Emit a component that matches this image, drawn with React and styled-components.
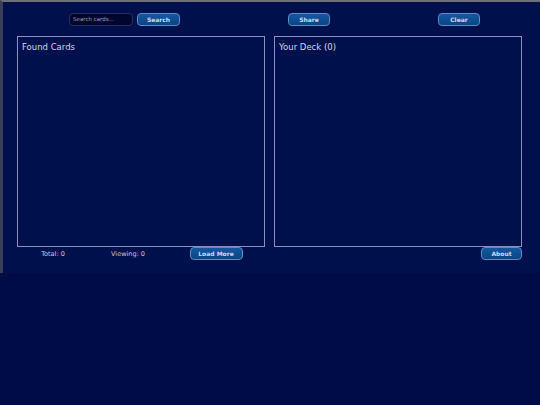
import styled, { createGlobalStyle } from 'styled-components';

const GlobalStyle = createGlobalStyle`
  html, body {
    margin: 0;
    padding: 0;
    background: #000c46;
    font-family: "Comic Sans MS", "DejaVu Sans", sans-serif;
  }
`;

const Frame = styled.div`
  box-sizing: border-box;
  width: 540px;
  height: 273px;
  background: #00104d;
  border-top: 2px solid #6e6f7a;
  border-left: 3px solid #3c3e58;
  box-shadow: 0 2px 2px #000524;
  display: flex;
  flex-direction: column;
`;

const Toolbar = styled.div`
  display: flex;
  align-items: center;
  gap: 108px;
  height: 34px;
  padding-left: 66px;
`;

const SearchGroup = styled.div`
  display: flex;
  align-items: center;
  gap: 4px;
`;

const SearchInput = styled.input`
  box-sizing: border-box;
  width: 64px;
  height: 13px;
  padding: 0 3px;
  background: #00062e;
  border: 1px solid #2a2f5a;
  border-radius: 4px;
  color: #c0c6dc;
  font-family: inherit;
  font-size: 5.5px;
  outline: none;

  &::placeholder {
    color: #9aa0bc;
  }
`;

const Button = styled.button`
  box-sizing: border-box;
  width: ${({ $w }) => $w}px;
  height: 13px;
  padding: 0;
  background: linear-gradient(#1457a0, #0a4585);
  border: 1px solid #5a8cc4;
  border-radius: 4px;
  color: #c9dcf4;
  font-family: inherit;
  font-size: 6px;
  font-weight: 600;
  line-height: 11px;
  cursor: pointer;
`;

const Columns = styled.div`
  display: grid;
  grid-template-columns: 248px 248px;
  column-gap: 9px;
  padding-left: 14px;
`;

const Box = styled.div`
  box-sizing: border-box;
  height: 211px;
  border: 1px solid #8a90b8;
  padding: 4px 4px;
`;

const BoxTitle = styled.div`
  color: #d2d6e4;
  font-size: 8.5px;
  line-height: 12px;
`;

const FooterLeft = styled.div`
  display: grid;
  grid-template-columns: 72px 78px 1fr;
  justify-items: center;
  align-items: center;
  height: 13px;
  margin-top: 0;
`;

const FooterRight = styled.div`
  display: flex;
  justify-content: flex-end;
  align-items: center;
  height: 13px;
  margin-top: 0;
`;

const Stat = styled.span`
  color: #c8ccdc;
  font-size: 6.5px;
`;

export default function App() {
  return (
    <>
      <GlobalStyle />
      <Frame>
        <Toolbar>
          <SearchGroup>
            <SearchInput placeholder="Search cards..." />
            <Button $w={43}>Search</Button>
          </SearchGroup>
          <Button $w={42}>Share</Button>
          <Button $w={42}>Clear</Button>
        </Toolbar>
        <Columns>
          <Box>
            <BoxTitle>Found Cards</BoxTitle>
          </Box>
          <Box>
            <BoxTitle>Your Deck (0)</BoxTitle>
          </Box>
          <FooterLeft>
            <Stat>Total: 0</Stat>
            <Stat>Viewing: 0</Stat>
            <Button $w={53}>Load More</Button>
          </FooterLeft>
          <FooterRight>
            <Button $w={41}>About</Button>
          </FooterRight>
        </Columns>
      </Frame>
    </>
  );
}
